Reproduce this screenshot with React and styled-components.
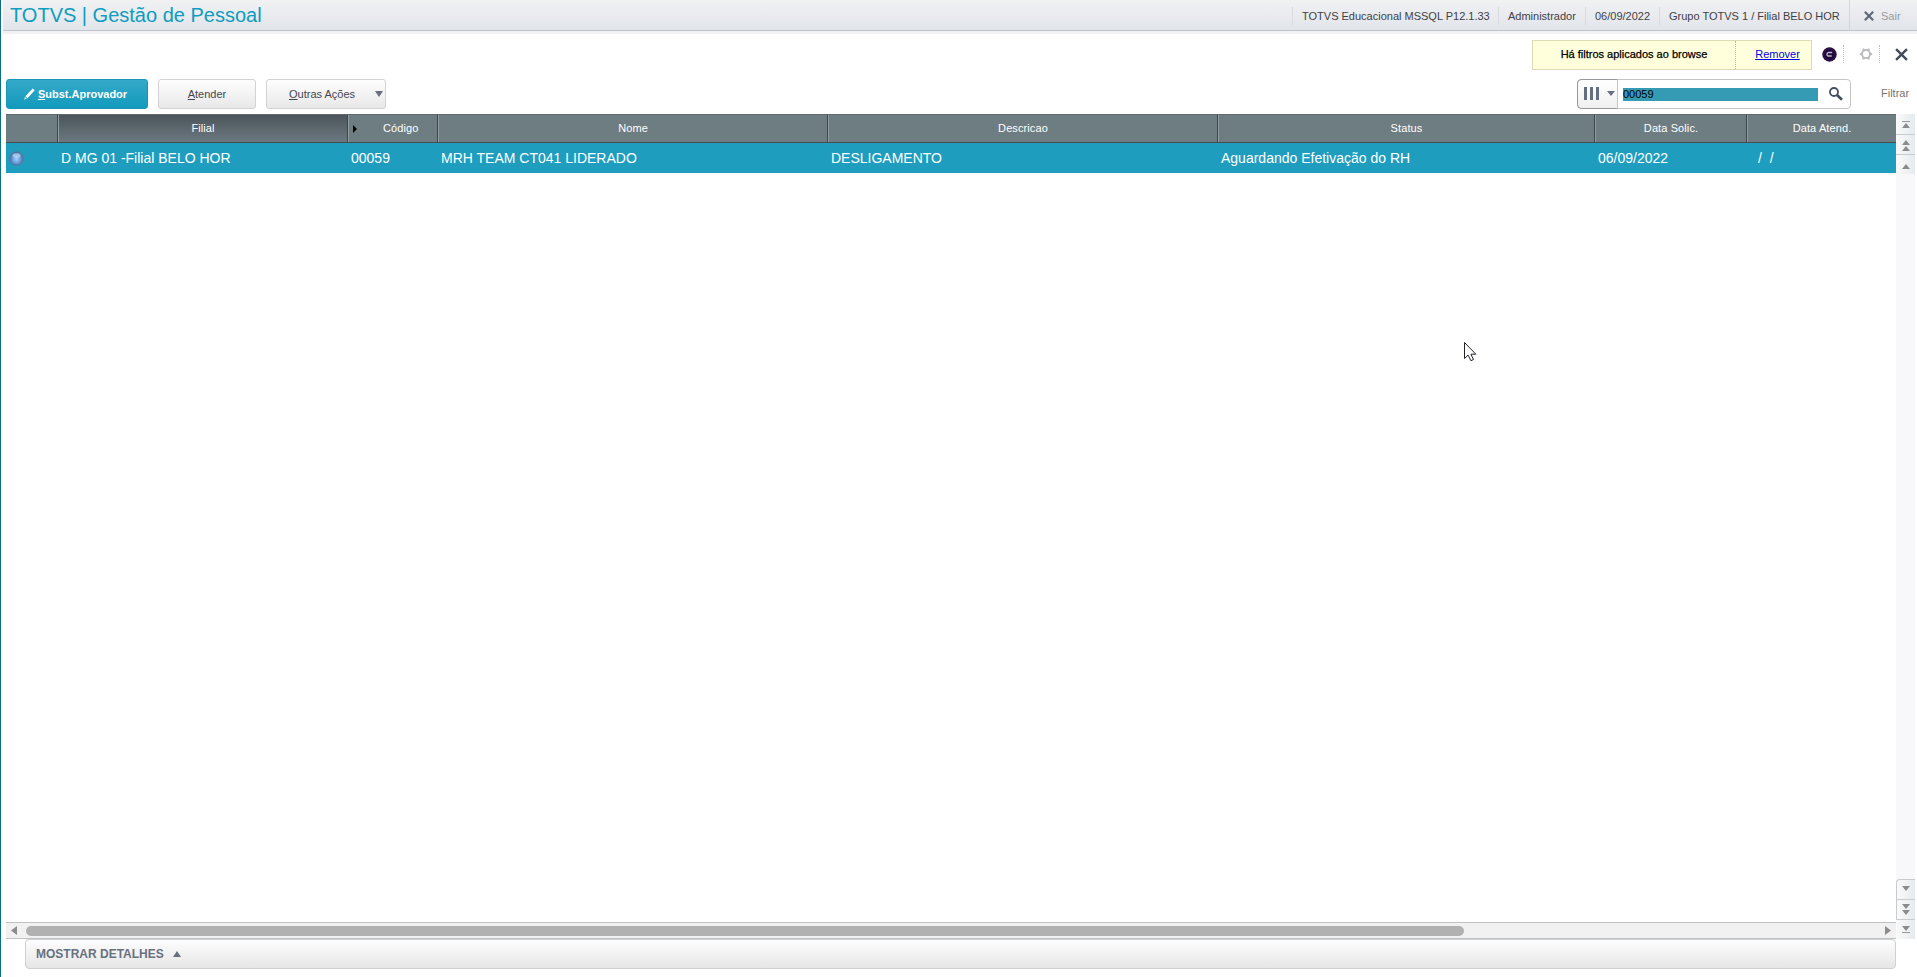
import React, { useState } from 'react';
import styled, { createGlobalStyle, css } from 'styled-components';

const GlobalStyle = createGlobalStyle`
  * {
    box-sizing: border-box;
  }
  body {
    margin: 0;
    overflow: hidden;
    background: #fff;
    font-family: "Liberation Sans", Arial, sans-serif;
    font-size: 11px;
    color: #3f4147;
  }
`

const Page = styled.div`
    display: flex;
    flex-direction: column;
    width: 100vw;
    height: 100vh;
    border-left: 1px solid #0b6f8a;
    padding-left: 2px;
    position: relative;
`

const Header = styled.header`
    display: flex;
    align-items: stretch;
    height: 34px;
    border-bottom: 3px solid #f1f1f3;
    flex: none;
`

const HeaderBar = styled.div`
    display: flex;
    flex: 1;
    height: 31px;
    background: linear-gradient(#f1f1f3, #e1e5ea);
    border-bottom: 1px solid #bec6cf;
`

const Title = styled.h1`
    margin: 0;
    padding-left: 7px;
    flex: 1;
    font-size: 20px;
    font-weight: normal;
    line-height: 30px;
    color: #0d9dc0;
`

const Info = styled.div`
    width: ${props => props.width}px;
    padding-left: 9px;
    margin: 7px 0 5px;
    border-left: 1px solid #d9dadd;
    line-height: 19px;
    white-space: nowrap;
`

const Exit = styled.button`
    display: flex;
    align-items: center;
    gap: 7px;
    width: 68px;
    padding: 1px 0 0 14px;
    background: none;
    border: 0;
    border-left: 1px solid #d3d5d9;
    font: inherit;
    color: #97999f;
`

const FilterBar = styled.div`
    display: flex;
    justify-content: flex-end;
    height: 45px;
    padding-top: 6px;
    flex: none;
`

const Notice = styled.div`
    display: flex;
    width: 280px;
    height: 30px;
    background: #ffffdc;
    border: 1px solid #dcdcb4;
    line-height: 27px;
    color: #000;
    text-align: center;
`

const NoticeText = styled.span`
    width: 203px;
    border-right: 1px dotted #b9b9a5;
    -webkit-text-stroke: 0.25px #000;
`

const Remove = styled.a`
    flex: 1;
    padding-left: 8px;
    color: #0000ee;
    text-decoration: underline;
`

const IconCell = styled.div`
    display: flex;
    align-items: center;
    justify-content: center;
    width: ${props => props.width}px;
    height: 18px;
    margin-top: 5px;
    padding-left: ${props => props.shift}px;
    ${props => props.dotted && css`border-right: 1px dotted #b9bbc0;`}
`

const Toolbar = styled.div`
    display: flex;
    gap: 10px;
    height: 35px;
    padding-left: 3px;
    flex: none;
`

const Button = styled.button`
    display: flex;
    align-items: center;
    justify-content: center;
    gap: 3px;
    width: ${props => props.width}px;
    height: 30px;
    padding: 0;
    border: 1px solid #d3d3d3;
    border-radius: 3px;
    background: linear-gradient(#fefefe, #e8e8e8);
    font: inherit;
    color: #43474f;
    ${props => props.primary && css`
      padding-right: 3px;
      border-color: #1a97b7;
      background: linear-gradient(#35a9c8, #129abd);
      color: #fff;
      font-weight: bold;
    `}
    ${props => props.menu && css`
      justify-content: space-between;
      padding: 0 2px 0 22px;
    `}
`

const Search = styled.div`
    display: flex;
    width: 274px;
    height: 30px;
    margin-left: auto;
    border: 1px solid #c3c5c7;
    border-radius: 4px;
`

const ColumnPicker = styled.button`
    display: flex;
    align-items: center;
    gap: 7px;
    width: 41px;
    margin: -1px 0 -1px -1px;
    padding: 0 0 2px 6px;
    border: 1px solid #96989c;
    border-right-color: #c3c5c7;
    border-radius: 5px 0 0 5px;
    background: linear-gradient(#fff, #f0f0f0);
`

const SearchInput = styled.input`
    width: 195px;
    height: 13px;
    margin: 8px 11px 0 5px;
    padding: 0 0 1px;
    border: 0;
    outline: 0;
    background: #359bb5;
    font: inherit;
    color: #000;
`

const FilterLink = styled.span`
    width: 56px;
    padding: 8px 0 0 20px;
    color: #7a7470;
`

const Grid = styled.main`
    display: flex;
    flex: 1;
    min-height: 0;
    padding: 0 2px 0 3px;
`

const GridMain = styled.div`
    display: flex;
    flex-direction: column;
    width: 1890px;
`

const columns = '52px 290px 90px 390px 390px 377px 152px 149px';

const HeadRow = styled.div`
    display: grid;
    grid-template-columns: ${columns};
    height: 29px;
    background: #6e7d82;
    border-top: 1px solid #62676c;
    border-bottom: 1px solid #464d50;
`

const HeadCell = styled.div`
    display: flex;
    align-items: center;
    justify-content: center;
    padding-bottom: 1px;
    border-left: 1px solid #929da1;
    border-right: 1px solid #3e484c;
    color: #fff;
    letter-spacing: 0.1px;
    &:first-child {
      border-left: 0;
    }
    &:last-child {
      border-right: 0;
    }
    ${props => props.active && css`
      background: linear-gradient(#4b555b, #6c7880);
    `}
    ${props => props.sorted && css`
      justify-content: flex-start;
    `}
`

const SortMark = styled.svg`
    margin: 1px 26px 0 4px;
`

const Row = styled.div`
    display: grid;
    grid-template-columns: ${columns};
    height: 30px;
    background: #1e9dbf;
    color: #fff;
    font-size: 14px;
    line-height: 30px;
`

const Cell = styled.div`
    padding-left: ${props => props.left || 3}px;
    white-space: pre;
`

const StatusCell = styled.div`
    display: flex;
    align-items: center;
    padding-left: 3px;
`

const HScroll = styled.div`
    display: flex;
    align-items: center;
    height: 17px;
    margin-top: auto;
    padding: 0 5px;
    background: #f1f1f1;
    border-top: 1px solid #bfc2c4;
    border-bottom: 1px solid #bfc2c4;
`

const HThumb = styled.div`
    width: 1438px;
    height: 10px;
    margin: 0 auto 0 9px;
    border-radius: 5px;
    background: #b1b1b1;
`

const VScroll = styled.div`
    display: flex;
    flex-direction: column;
    flex: 1;
    background: #f8f8fb;
`

const ScrollButton = styled.button`
    display: flex;
    align-items: center;
    justify-content: center;
    height: 20px;
    padding: 0;
    border: 0;
    border-bottom: 1px solid #c9cbcd;
    background: linear-gradient(to right, #fafafa, #e6eaee);
    ${props => props.first && css`
      height: 21px;
    `}
    ${props => props.push && css`
      margin-top: auto;
      height: 21px;
      border-top: 1px solid #c9cbcd;
      border-radius: 4px 0 0 0;
    `}
    ${props => props.down && css`border-left: 1px solid #c9cbcd;`}
    ${props => props.end && css`
      height: 19px;
      border-bottom: 0;
    `}
`

const Details = styled.button`
    display: flex;
    align-items: center;
    gap: 9px;
    width: 1871px;
    height: 30px;
    margin: 0 0 8px 22px;
    padding: 0 0 0 10px;
    border: 1px solid #cfd0d1;
    border-radius: 4px;
    background: linear-gradient(#fdfdfd, #e6e6e6);
    font: bold 12px "Liberation Sans", Arial, sans-serif;
    color: #68717f;
    flex: none;
`

const Pointer = styled.svg`
    position: absolute;
    left: 1462px;
    top: 341px;
`

const Triangle = ({ size = 8, height = 5, down, color = '#686f7d' }) => (
  <svg width={size} height={height} viewBox="0 0 8 5" preserveAspectRatio="none">
    <path d={down ? 'M0 0h8L4 5z' : 'M0 5h8L4 0z'} fill={color} />
  </svg>
)

const ScrollGlyph = ({ kind, down }) => (
  <svg width="10" height="12" viewBox="0 0 10 12" transform={down ? 'scale(1 -1)' : undefined}>
    {kind === 'edge' && <path d="M1 3.5h8" stroke="#999" />}
    {kind === 'edge' && <path d="M1 10h8L5 5z" fill="#8c8c8c" />}
    {kind === 'page' && <path d="M1 6h8L5 1zM1 12h8L5 7z" fill="#8c8c8c" />}
    {kind === 'line' && <path d="M1 10h8L5 5z" fill="#8c8c8c" />}
  </svg>
)

const SideArrow = ({ right }) => (
  <svg width="6" height="9" viewBox="0 0 6 9">
    <path d={right ? 'M0 0v9L6 4.5z' : 'M6 0v9L0 4.5z'} fill="#8c8c8c" />
  </svg>
)

const Cross = ({ size, width = 2, color = '#4b5362' }) => (
  <svg width={size} height={size} viewBox="0 0 12 12">
    <path d="M1 1l10 10M11 1L1 11" stroke={color} strokeWidth={width} />
  </svg>
)

const Pencil = () => (
  <svg width="11" height="12" viewBox="0 0 11 12">
    <path d="M8.7 0.4l2 1.8-7.2 8-2.1-1.9z" fill="#fff" />
    <path d="M0.9 8.9l1.9 1.7L0.2 11.8z" fill="#fff" />
  </svg>
)

const teeth = [0, 60, 120, 180, 240, 300];

const Gear = () => (
  <svg width="14" height="14" viewBox="0 0 14 14">
    <circle cx="7" cy="7" r="4" fill="none" stroke="#bcbdbf" strokeWidth="1.8" />
    {teeth.map(angle => (
      <path key={angle} d="M10.8 5.2l2.4 1v1.6l-2.4 1z" fill="#bcbdbf" transform={`rotate(${angle} 7 7)`} />
    ))}
  </svg>
)

const Badge = () => (
  <svg width="15" height="15" viewBox="0 0 15 15">
    <circle cx="7.5" cy="7.5" r="7.2" fill="#1d0a38" />
    <circle cx="7.5" cy="7.5" r="5.8" fill="none" stroke="#3c1454" />
    <path d="M10.2 5.5H6.6Q5 5.5 5 7.3T6.4 9h3.4" fill="none" stroke="#c4b5d0" strokeWidth="1.4" />
  </svg>
)

const Lens = () => (
  <svg width="14" height="27" viewBox="0 -7 14 27" fill="none" stroke="#454e5e">
    <circle cx="5" cy="5" r="4" strokeWidth="1.8" />
    <path d="M8 8l5 4.7" strokeWidth="2.6" />
  </svg>
)

const Bars = () => (
  <svg width="16" height="13" viewBox="0 0 16 13">
    <path d="M0 0h3v13H0zM6 0h3v13H6zM12 0h3v13h-3z" fill="#656e80" />
  </svg>
)

const Ball = () => (
  <svg width="15" height="15" viewBox="0 0 15 15">
    <defs>
      <radialGradient id="ball" cx="50%" cy="55%">
        <stop offset="0" stopColor="#a4d0fa" />
        <stop offset="0.7" stopColor="#5e92d4" />
        <stop offset="1" stopColor="#4b70ac" />
      </radialGradient>
    </defs>
    <circle cx="7.5" cy="7.5" r="6.7" fill="url(#ball)" stroke="#5b7696" />
    <ellipse cx="7.5" cy="4.6" rx="4" ry="2.4" fill="#cfe0f4" opacity="0.6" />
  </svg>
)

const App = () => {
  const [term, setTerm] = useState('00059');

  return (
    <Page>
      <GlobalStyle />
      <Header>
        <HeaderBar>
          <Title>TOTVS | Gestão de Pessoal</Title>
          <Info width={206}>TOTVS Educacional MSSQL P12.1.33</Info>
          <Info width={87}>Administrador</Info>
          <Info width={74}>06/09/2022</Info>
          <Info width={190}>Grupo TOTVS 1 / Filial BELO HOR</Info>
          <Exit><Cross size={10} width={2.6} color="#61687a" />Sair</Exit>
        </HeaderBar>
      </Header>
      <FilterBar>
        <Notice>
          <NoticeText>Há filtros aplicados ao browse</NoticeText>
          <Remove>Remover</Remove>
        </Notice>
        <IconCell width={32} shift={4} dotted><Badge /></IconCell>
        <IconCell width={36} shift={9} dotted><Gear /></IconCell>
        <IconCell width={37} shift={6}><Cross size={13} width={2.2} color="#414b5c" /></IconCell>
      </FilterBar>
      <Toolbar>
        <Button width={142} primary><Pencil /><span><u>S</u>ubst.Aprovador</span></Button>
        <Button width={98}><span><u>A</u>tender</span></Button>
        <Button width={120} menu><span><u>O</u>utras Ações</span><Triangle down height={6} /></Button>
        <Search>
          <ColumnPicker><Bars /><Triangle down /></ColumnPicker>
          <SearchInput value={term} onChange={e => setTerm(e.target.value)} />
          <Lens />
        </Search>
        <FilterLink>Filtrar</FilterLink>
      </Toolbar>
      <Grid>
        <GridMain>
          <HeadRow>
            <HeadCell />
            <HeadCell active>Filial</HeadCell>
            <HeadCell sorted>
              <SortMark width="4" height="8"><path d="M0 0v8l4-4z" fill="#000" /></SortMark>
              Código
            </HeadCell>
            <HeadCell>Nome</HeadCell>
            <HeadCell>Descricao</HeadCell>
            <HeadCell>Status</HeadCell>
            <HeadCell>Data Solic.</HeadCell>
            <HeadCell>Data Atend.</HeadCell>
          </HeadRow>
          <Row>
            <StatusCell><Ball /></StatusCell>
            <Cell>D MG 01 -Filial BELO HOR</Cell>
            <Cell>00059</Cell>
            <Cell>MRH TEAM CT041 LIDERADO</Cell>
            <Cell>DESLIGAMENTO</Cell>
            <Cell>Aguardando Efetivação do RH</Cell>
            <Cell>06/09/2022</Cell>
            <Cell left={11}>/  /</Cell>
          </Row>
          <HScroll>
            <SideArrow />
            <HThumb />
            <SideArrow right />
          </HScroll>
        </GridMain>
        <VScroll>
          <ScrollButton first><ScrollGlyph kind="edge" /></ScrollButton>
          <ScrollButton><ScrollGlyph kind="page" /></ScrollButton>
          <ScrollButton end><ScrollGlyph kind="line" /></ScrollButton>
          <ScrollButton push down><ScrollGlyph kind="line" down /></ScrollButton>
          <ScrollButton down><ScrollGlyph kind="page" down /></ScrollButton>
          <ScrollButton end><ScrollGlyph kind="edge" down /></ScrollButton>
        </VScroll>
      </Grid>
      <Details>MOSTRAR DETALHES<Triangle height={6} /></Details>
      <Pointer width="14" height="22" viewBox="0 0 14 22">
        <path d="M1.5 1.5v16l3.6-3.4 2.8 5.6 2.6-1.2-2.6-5.3h4.9z" fill="#fff" stroke="#23202c" />
      </Pointer>
    </Page>
  )
}

export default App;
